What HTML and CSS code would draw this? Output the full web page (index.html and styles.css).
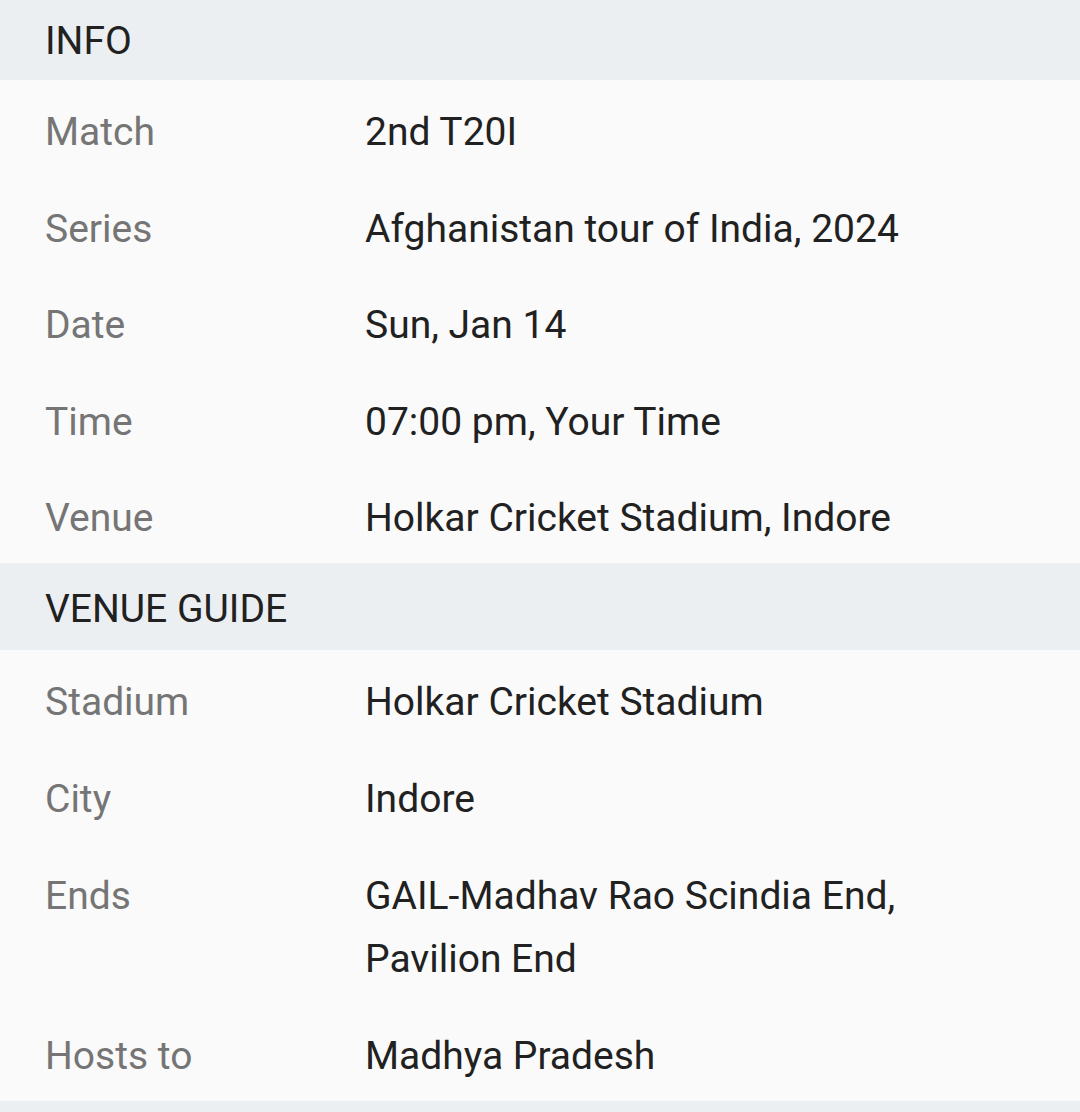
FILE: index.html
```html
<!DOCTYPE html>
<html lang="en">
<head>
    <meta charset="UTF-8">
    <meta name="viewport" content="width=device-width, initial-scale=1.0">
    <title>Match Info</title>
    <link rel="stylesheet" href="styles.css">
</head>
<body>
    <div class="section-title">INFO</div>
    <div class="section info">
        <div class="row"><div class="label">Match</div><div class="value">2nd T20I</div></div>
        <div class="row"><div class="label">Series</div><div class="value">Afghanistan tour of India, 2024</div></div>
        <div class="row"><div class="label">Date</div><div class="value">Sun, Jan 14</div></div>
        <div class="row"><div class="label">Time</div><div class="value">07:00 pm, Your Time</div></div>
        <div class="row"><div class="label">Venue</div><div class="value">Holkar Cricket Stadium, Indore</div></div>
    </div>

    <div class="section-title venue">VENUE GUIDE</div>
    <div class="section guide">
        <div class="row"><div class="label">Stadium</div><div class="value">Holkar Cricket Stadium</div></div>
        <div class="row"><div class="label">City</div><div class="value">Indore</div></div>
        <div class="row"><div class="label">Ends</div><div class="value">GAIL-Madhav Rao Scindia End,<br>Pavilion End</div></div>
        <div class="row"><div class="label">Hosts to</div><div class="value">Madhya Pradesh</div></div>
    </div>
    <div class="section-title footer"></div>
</body>
</html>
```
FILE: styles.css
```css
body {
    margin: 0;
    padding: 0;
    background-color: #fafafa;
    font-family: Roboto, "Noto Sans", sans-serif;
    font-size: 39px;
    color: #212121;
}

.section-title {
    background-color: #eceff1;
    height: 80px;
    line-height: 82px;
    padding-left: 45px;
    color: #212121;
}

.section-title.venue {
    height: 87px;
    line-height: 92px;
}

.section-title.footer {
    height: 20px;
}

.row {
    display: flex;
    line-height: 63px;
}

.info .row {
    padding: 21px 0 12.6px;
}

.guide .row {
    padding: 21px 0 13px;
}

.label {
    width: 320px;
    padding-left: 45px;
    color: #757575;
}

.value {
    flex: 1;
}
```
